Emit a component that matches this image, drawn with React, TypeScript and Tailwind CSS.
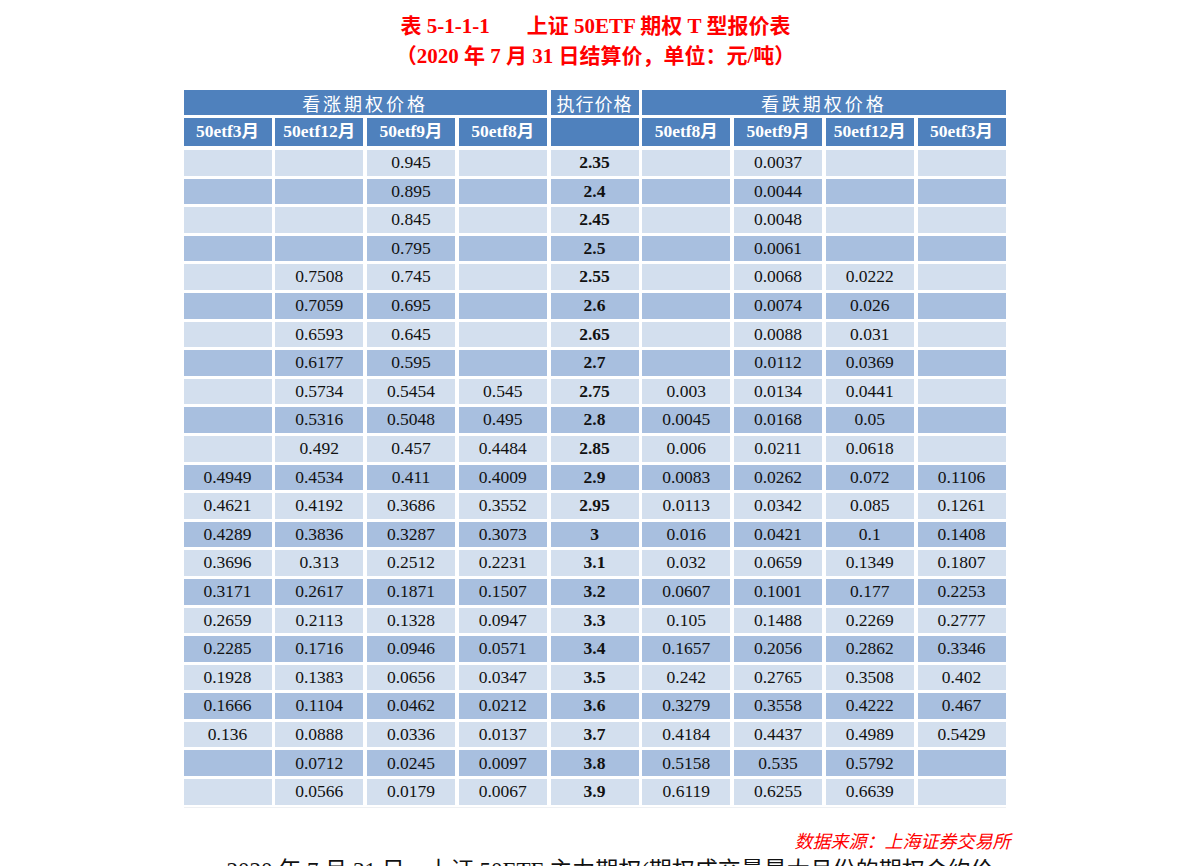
import React from "react";

type Row = { k: string; c: string[]; p: string[] };

const rows: Row[] = [
  { k: "2.35", c: ["", "", "0.945", ""], p: ["", "0.0037", "", ""] },
  { k: "2.4", c: ["", "", "0.895", ""], p: ["", "0.0044", "", ""] },
  { k: "2.45", c: ["", "", "0.845", ""], p: ["", "0.0048", "", ""] },
  { k: "2.5", c: ["", "", "0.795", ""], p: ["", "0.0061", "", ""] },
  { k: "2.55", c: ["", "0.7508", "0.745", ""], p: ["", "0.0068", "0.0222", ""] },
  { k: "2.6", c: ["", "0.7059", "0.695", ""], p: ["", "0.0074", "0.026", ""] },
  { k: "2.65", c: ["", "0.6593", "0.645", ""], p: ["", "0.0088", "0.031", ""] },
  { k: "2.7", c: ["", "0.6177", "0.595", ""], p: ["", "0.0112", "0.0369", ""] },
  { k: "2.75", c: ["", "0.5734", "0.5454", "0.545"], p: ["0.003", "0.0134", "0.0441", ""] },
  { k: "2.8", c: ["", "0.5316", "0.5048", "0.495"], p: ["0.0045", "0.0168", "0.05", ""] },
  { k: "2.85", c: ["", "0.492", "0.457", "0.4484"], p: ["0.006", "0.0211", "0.0618", ""] },
  { k: "2.9", c: ["0.4949", "0.4534", "0.411", "0.4009"], p: ["0.0083", "0.0262", "0.072", "0.1106"] },
  { k: "2.95", c: ["0.4621", "0.4192", "0.3686", "0.3552"], p: ["0.0113", "0.0342", "0.085", "0.1261"] },
  { k: "3", c: ["0.4289", "0.3836", "0.3287", "0.3073"], p: ["0.016", "0.0421", "0.1", "0.1408"] },
  { k: "3.1", c: ["0.3696", "0.313", "0.2512", "0.2231"], p: ["0.032", "0.0659", "0.1349", "0.1807"] },
  { k: "3.2", c: ["0.3171", "0.2617", "0.1871", "0.1507"], p: ["0.0607", "0.1001", "0.177", "0.2253"] },
  { k: "3.3", c: ["0.2659", "0.2113", "0.1328", "0.0947"], p: ["0.105", "0.1488", "0.2269", "0.2777"] },
  { k: "3.4", c: ["0.2285", "0.1716", "0.0946", "0.0571"], p: ["0.1657", "0.2056", "0.2862", "0.3346"] },
  { k: "3.5", c: ["0.1928", "0.1383", "0.0656", "0.0347"], p: ["0.242", "0.2765", "0.3508", "0.402"] },
  { k: "3.6", c: ["0.1666", "0.1104", "0.0462", "0.0212"], p: ["0.3279", "0.3558", "0.4222", "0.467"] },
  { k: "3.7", c: ["0.136", "0.0888", "0.0336", "0.0137"], p: ["0.4184", "0.4437", "0.4989", "0.5429"] },
  { k: "3.8", c: ["", "0.0712", "0.0245", "0.0097"], p: ["0.5158", "0.535", "0.5792", ""] },
  { k: "3.9", c: ["", "0.0566", "0.0179", "0.0067"], p: ["0.6119", "0.6255", "0.6639", ""] },
];

const serif = "font-['Liberation_Serif','Noto_Sans_CJK_SC',serif]";
const sans = "font-['Noto_Sans_CJK_SC','Noto_Sans',sans-serif]";

function Cell({ v, dark, bold }: { v: string; dark: boolean; bold?: boolean }) {
  return (
    <div
      className={
        "flex h-[25.6px] items-center justify-center text-[17.5px] leading-none text-[#111] " +
        (dark ? "bg-[#a8bfdf] " : "bg-[#d3dfee] ") +
        (bold ? "font-bold" : "")
      }
    >
      {v}
    </div>
  );
}

function SubHead({ t }: { t: string }) {
  return (
    <div className="flex h-[28px] items-center justify-center bg-[#4f81bd] text-[17.5px] font-bold leading-none text-white">
      {t}
    </div>
  );
}

export default function App() {
  return (
    <div className={"min-h-[866px] w-full bg-white " + serif}>
      <div className="flex flex-col items-center pt-[11px] text-[21px] font-bold leading-[30px] text-[#ff0000]">
        <div className="whitespace-pre">
          表 5-1-1-1<span className="inline-block w-[37px]" />上证 50ETF 期权 T 型报价表
        </div>
        <div>（2020 年 7 月 31 日结算价，单位：元/吨）</div>
      </div>

      <div className="mx-auto mt-[19px] w-[822px] -translate-x-px">
        <div className="grid grid-cols-[repeat(9,88px)] gap-x-[3.75px]">
          <div
            className={
              "col-span-4 flex h-[25px] items-center justify-center bg-[#4f81bd] text-[18px] leading-none tracking-[3px] text-white " +
              sans
            }
          >
            看涨期权价格
          </div>
          <div
            className={
              "flex h-[25px] items-center justify-center bg-[#4f81bd] text-[18px] leading-none tracking-[1px] text-white " +
              sans
            }
          >
            执行价格
          </div>
          <div
            className={
              "col-span-4 flex h-[25px] items-center justify-center bg-[#4f81bd] text-[18px] leading-none tracking-[3px] text-white " +
              sans
            }
          >
            看跌期权价格
          </div>
        </div>

        <div className="mt-[3px] grid grid-cols-[repeat(9,88px)] gap-x-[3.75px]">
          <SubHead t="50etf3月" />
          <SubHead t="50etf12月" />
          <SubHead t="50etf9月" />
          <SubHead t="50etf8月" />
          <SubHead t="" />
          <SubHead t="50etf8月" />
          <SubHead t="50etf9月" />
          <SubHead t="50etf12月" />
          <SubHead t="50etf3月" />
        </div>

        <div className="mt-[4px] grid grid-cols-[repeat(9,88px)] gap-x-[3.75px] gap-y-[3px]">
          {rows.map((r, i) => {
            const dark = i % 2 === 1;
            return (
              <React.Fragment key={r.k}>
                {r.c.map((v, j) => (
                  <Cell key={"c" + j} v={v} dark={dark} />
                ))}
                <Cell v={r.k} dark={dark} bold />
                {r.p.map((v, j) => (
                  <Cell key={"p" + j} v={v} dark={dark} />
                ))}
              </React.Fragment>
            );
          })}
        </div>
        <div className="mt-[2px] h-px w-full bg-[#eef0f3]" />
      </div>

      <div className="mx-auto mt-[20px] flex w-[830px] justify-end">
        <div className={"text-[18px] italic leading-[24px] text-[#ff0000] " + sans}>
          数据来源：上海证券交易所
        </div>
      </div>

      <div className="mx-auto mt-[4px] h-[14px] w-[830px] overflow-hidden">
        <div className={"pl-[46px] text-[23px] leading-[30px] text-[#111] whitespace-nowrap " + serif}>
          2020 年 7 月 31 日，上证 50ETF 主力期权(期权成交量最大月份的期权合约价
        </div>
      </div>
    </div>
  );
}
